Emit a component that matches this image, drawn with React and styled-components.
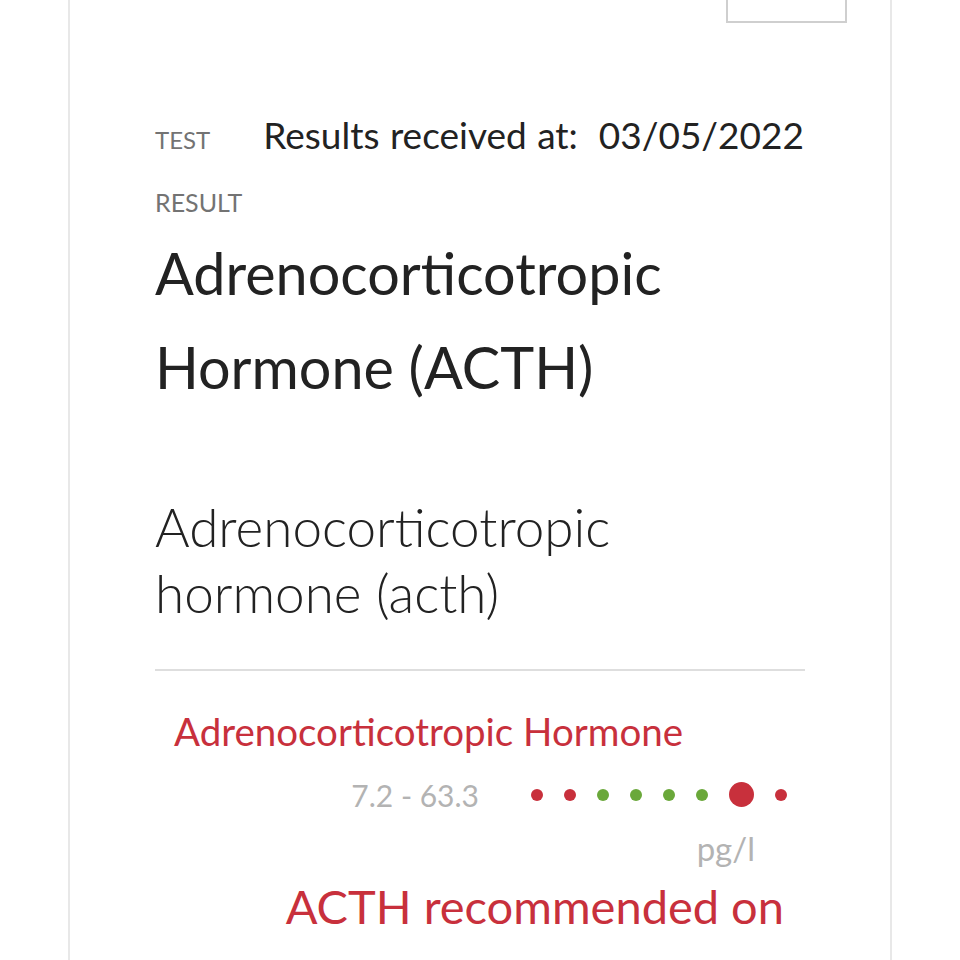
import styled, { createGlobalStyle } from "styled-components";

const GlobalStyle = createGlobalStyle`
	body {
		margin: 0;
		background: #ffffff;
		font-family: Lato, "Liberation Sans", sans-serif;
		color: #222222;
	}
`;

const red = "#c8303c";
const green = "#6aa83a";

const Page = styled.div`
	padding: 0 68px;
	height: 960px;
	overflow: hidden;
`;

const Card = styled.section`
	margin-top: -60px;
	border: 2px solid #e8e8e8;
	padding: 0 85px 120px;
`;

const Header = styled.div`
	display: flex;
	justify-content: flex-end;
	margin-right: -42px;
`;

const ActionBox = styled.div`
	width: 117px;
	height: 77px;
	border: 2px solid #cfcfcf;
	background: #fff;
`;

const MetaRow = styled.div`
	display: flex;
	align-items: baseline;
	gap: 53px;
	margin-top: 90px;
`;

const Label = styled.div`
	font-size: ${p => p.$size || 24}px;
	line-height: 1.2;
	color: #737373;
	text-transform: uppercase;
	margin-top: ${p => p.$top || 0}px;
`;

const Received = styled.div`
	font-size: 37px;
	line-height: 1.2;
	color: #222;
	white-space: nowrap;
	word-spacing: 1px;
`;

const Title = styled.h1`
	margin: 9px 0 0;
	font-size: 57.5px;
	font-weight: 400;
	line-height: 94px;
	color: #222;
`;

const Subtitle = styled.h2`
	margin: 80px 0 0;
	font-size: 53px;
	font-weight: 300;
	line-height: 66px;
	color: #222;
`;

const Divider = styled.hr`
	margin: 43px 0 0;
	border: 0;
	border-top: 2px solid #dedede;
`;

const MarkerName = styled.div`
	margin-top: 37px;
	padding-left: 19px;
	font-size: 38.5px;
	line-height: 1.2;
	color: ${red};
`;

const RangeRow = styled.div`
	display: flex;
	align-items: center;
	justify-content: flex-end;
	gap: 52px;
	margin-top: 22px;
	padding-right: 18px;
`;

const RangeText = styled.span`
	font-size: 30px;
	line-height: 1.2;
	color: #b3b3b3;
`;

const Scale = styled.div`
	display: flex;
	align-items: center;
	gap: 21px;
`;

const Dot = styled.span`
	width: ${p => (p.$big ? 25 : 12)}px;
	height: ${p => (p.$big ? 25 : 12)}px;
	border-radius: 50%;
	background: ${p => (p.$ok ? green : red)};
`;

const Unit = styled.div`
	margin-top: 15px;
	padding-right: 50px;
	text-align: right;
	font-size: 33px;
	line-height: 40px;
	color: #b3b3b3;
`;

const Advice = styled.div`
	margin-top: 5px;
	padding-right: 21px;
	text-align: right;
	font-size: 47px;
	line-height: 67px;
	color: ${red};
`;

const AdviceLine = styled.span`
	display: block;
	margin-top: ${p => p.$top || 0}px;
`;

const dots = [
	{ ok: false },
	{ ok: false },
	{ ok: true },
	{ ok: true },
	{ ok: true },
	{ ok: true },
	{ ok: false, big: true },
	{ ok: false },
];

export default function App() {
	return (
		<Page>
			<GlobalStyle />
			<Card>
				<Header>
					<ActionBox />
				</Header>
				<MetaRow>
					<Label>Test</Label>
					<Received>Results received at:&nbsp; 03/05/2022</Received>
				</MetaRow>
				<Label $top={30} $size={25}>Result</Label>
				<Title>
					Adrenocorticotropic
					<br />
					Hormone (ACTH)
				</Title>
				<Subtitle>
					Adrenocorticotropic
					<br />
					hormone (acth)
				</Subtitle>
				<Divider />
				<MarkerName>Adrenocorticotropic Hormone</MarkerName>
				<RangeRow>
					<RangeText>7.2 - 63.3</RangeText>
					<Scale>
						{dots.map((d, i) => (
							<Dot key={i} $ok={d.ok} $big={d.big} />
						))}
					</Scale>
				</RangeRow>
				<Unit>pg/l</Unit>
				<Advice>
					<AdviceLine>ACTH recommended on</AdviceLine>
					<AdviceLine $top={10}>a fasting morning, 8-10 AM</AdviceLine>
				</Advice>
			</Card>
		</Page>
	);
}
